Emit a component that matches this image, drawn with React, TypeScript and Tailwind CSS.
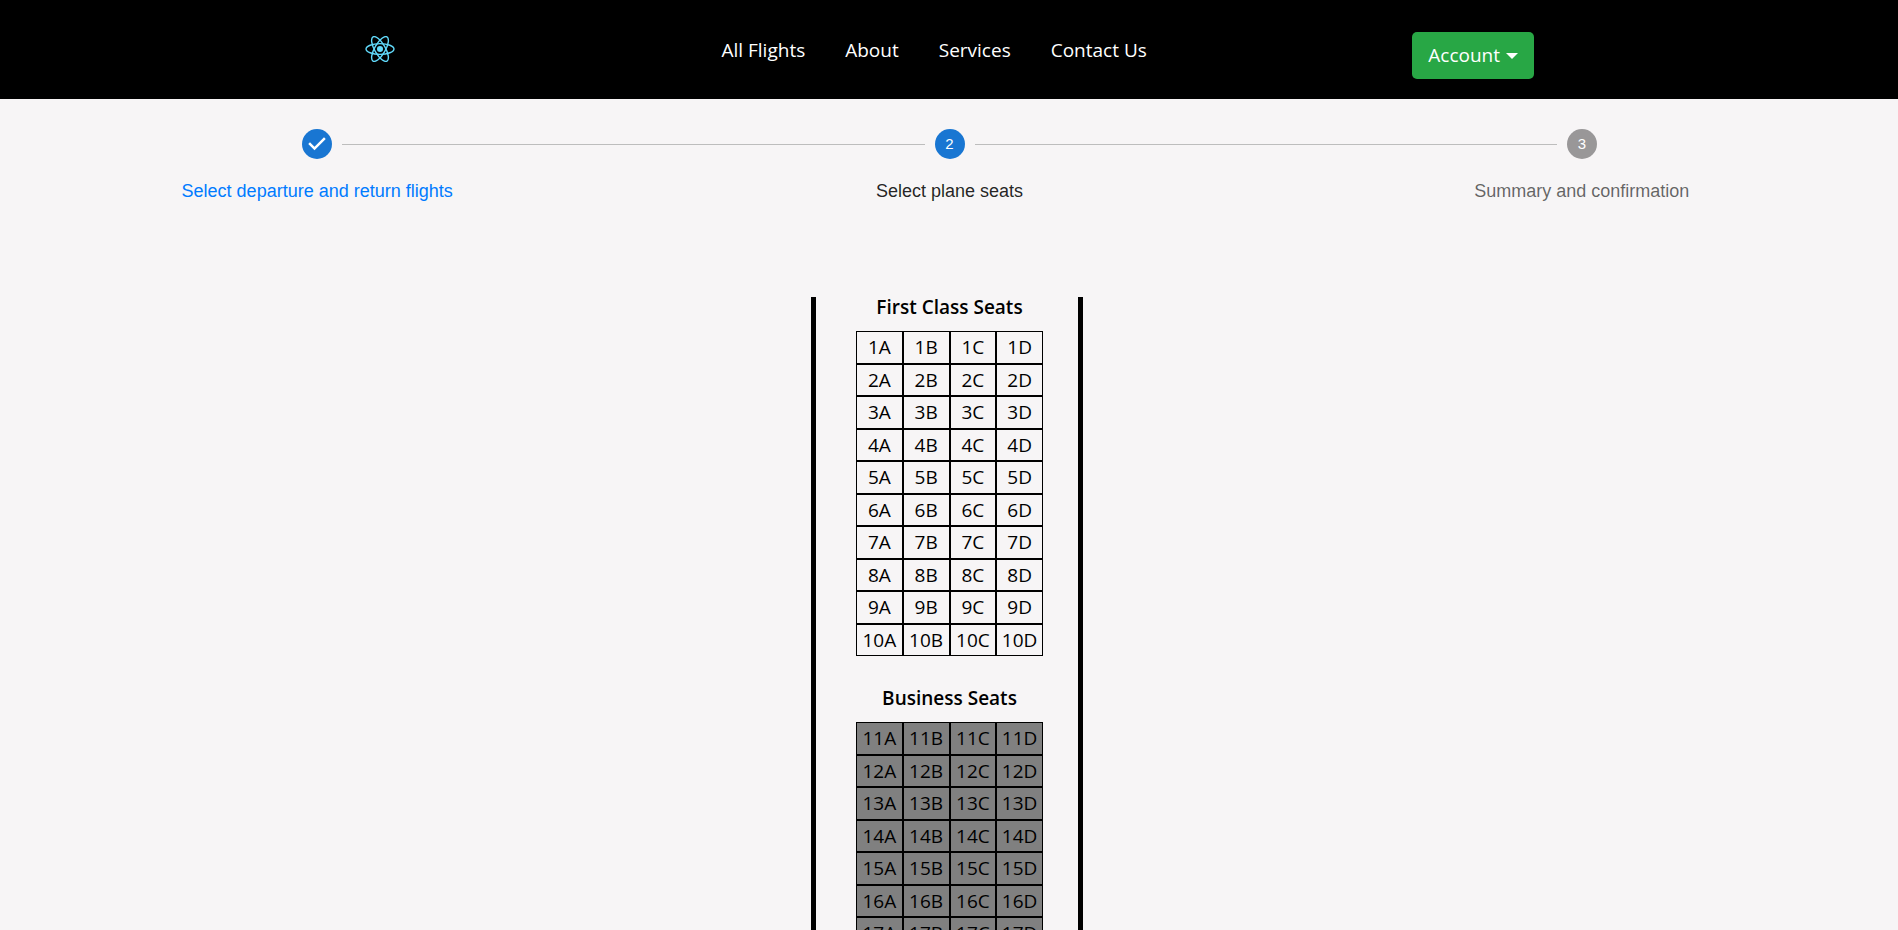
const navLinks = ["All Flights", "About", "Services", "Contact Us"];
const columns = ["A", "B", "C", "D"];

function ReactLogo() {
  return (
    <svg
      viewBox="-11.5 -10.23174 23 20.46348"
      className="h-[26px] w-[30px]"
      fill="none"
      stroke="#61dafb"
      strokeWidth="1.1"
      aria-hidden="true"
    >
      <circle r="2.4" fill="#61dafb" stroke="none" />
      <ellipse rx="11" ry="4.2" />
      <ellipse rx="11" ry="4.2" transform="rotate(60)" />
      <ellipse rx="11" ry="4.2" transform="rotate(120)" />
    </svg>
  );
}

function Header() {
  return (
    <header className="bg-black px-4 text-white">
      <div className="mx-auto flex h-[99px] max-w-[1170px] items-center justify-between">
        <a href="#home" aria-label="Home" className="w-[92px] pb-px pl-px">
          <ReactLogo />
        </a>
        <nav className="flex gap-10 pt-0.5 text-[19px]">
          {navLinks.map((label) => (
            <a key={label} href="#">
              {label}
            </a>
          ))}
        </nav>
        <button
          type="button"
          className="mt-3 flex h-[47px] items-center gap-1.5 rounded-[5px] bg-[#28a745] px-4 text-[19px]"
        >
          Account
          <span className="border-x-[6px] border-t-[6px] border-x-transparent border-t-white" />
        </button>
      </div>
    </header>
  );
}

type StepState = "done" | "active" | "todo";

const steps: { label: string; state: StepState }[] = [
  { label: "Select departure and return flights", state: "done" },
  { label: "Select plane seats", state: "active" },
  { label: "Summary and confirmation", state: "todo" },
];

const circleColor: Record<StepState, string> = {
  done: "bg-[#1976d2]",
  active: "bg-[#1976d2]",
  todo: "bg-[#999798]",
};

const labelColor: Record<StepState, string> = {
  done: "text-[#007bff]",
  active: "text-black/87",
  todo: "text-black/60",
};

function Stepper() {
  return (
    <ol className="grid grid-cols-3 pt-[30px] pl-px font-['Liberation_Sans',Arial,sans-serif]">
      {steps.map((step, i) => (
        <li key={step.label} className="flex flex-col items-center gap-[19px]">
          <div className="flex w-full items-center gap-[10px]">
            <span className={i > 0 ? "h-px flex-1 bg-[#bdbdbd]" : "h-px flex-1"} />
            <span
              className={`flex size-[30px] items-center justify-center rounded-full text-[15px] text-white ${circleColor[step.state]}`}
            >
              {step.state === "done" ? (
                <svg viewBox="0 0 24 24" className="size-[30px]" fill="white" aria-hidden="true">
                  <path d="M10 17l-5-5 1.4-1.4 3.6 3.6 7.6-7.6L19 8l-9 9z" />
                </svg>
              ) : (
                i + 1
              )}
            </span>
            <span
              className={i < steps.length - 1 ? "h-px flex-1 bg-[#bdbdbd]" : "h-px flex-1"}
            />
          </div>
          <span className={`text-[18px] leading-[26px] ${labelColor[step.state]}`}>
            {step.state === "done" ? <a href="#flights">{step.label}</a> : step.label}
          </span>
        </li>
      ))}
    </ol>
  );
}

function SeatSection({
  title,
  firstRow,
  taken = false,
}: {
  title: string;
  firstRow: number;
  taken?: boolean;
}) {
  const rows = Array.from({ length: 10 }, (_, i) => firstRow + i);
  return (
    <section>
      <h2 className="mb-[14px] text-center text-[19px] leading-[20px] font-semibold">{title}</h2>
      <table
        className={`h-[325px] w-[187px] table-fixed border-separate border-spacing-0 ${
          taken ? "bg-[#808080]" : ""
        }`}
      >
        <tbody>
          {rows.map((row) => (
            <tr key={row}>
              {columns.map((col) => (
                <td key={col} className="border border-black p-0">
                  <button
                    type="button"
                    disabled={taken}
                    className="block w-full text-center text-[19px] leading-[30px]"
                  >
                    {row}
                    {col}
                  </button>
                </td>
              ))}
            </tr>
          ))}
        </tbody>
      </table>
    </section>
  );
}

export default function App() {
  return (
    <div className="min-h-screen bg-[#f7f5f6] font-['Open_Sans','Noto_Sans',sans-serif] text-black">
      <Header />
      <Stepper />
      <main className="flex justify-center pt-[93px] pr-1">
        <div className="flex flex-col gap-8 border-x-[5px] border-black pr-[35px] pl-10">
          <SeatSection title="First Class Seats" firstRow={1} />
          <SeatSection title="Business Seats" firstRow={11} taken />
        </div>
      </main>
    </div>
  );
}
